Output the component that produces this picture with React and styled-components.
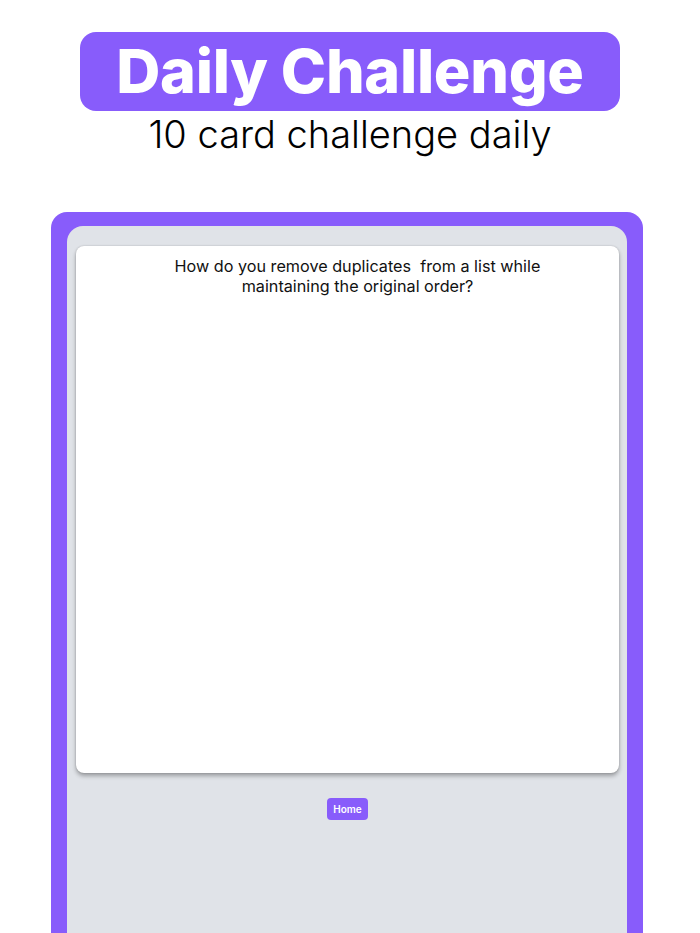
import styled, { createGlobalStyle } from "styled-components";

const GlobalStyle = createGlobalStyle`
  body {
    margin: 0;
    background: #ffffff;
    font-family: "Inter", "Noto Sans", sans-serif;
  }
`;

const Page = styled.div`
  width: 700px;
  height: 933px;
  overflow: hidden;
  display: flex;
  flex-direction: column;
  align-items: center;
`;

const Header = styled.header`
  display: flex;
  flex-direction: column;
  align-items: center;
  padding-top: 32px;
`;

const Title = styled.h1`
  margin: 0;
  width: 540px;
  height: 79px;
  border-radius: 16px;
  background: #885cfb;
  color: #ffffff;
  font-family: "Inter", sans-serif;
  font-weight: 800;
  font-size: 61px;
  line-height: 79px;
  letter-spacing: -0.3px;
  text-align: center;
`;

const Subtitle = styled.p`
  margin: 0;
  font-family: "Inter", sans-serif;
  font-weight: 300;
  font-size: 38px;
  line-height: 46px;
  color: #000000;
`;

const Frame = styled.main`
  align-self: flex-start;
  margin: 55px 0 0 51px;
  width: 592px;
  flex: 1;
  box-sizing: border-box;
  padding: 14px 16px 0;
  background: #885cfb;
  border-radius: 16px 16px 0 0;
  display: flex;
`;

const Panel = styled.section`
  flex: 1;
  background: #e0e3e8;
  border-radius: 16px 16px 0 0;
  padding: 20px 8px 0 9px;
  display: flex;
  flex-direction: column;
  align-items: center;
`;

const Card = styled.article`
  align-self: stretch;
  height: 527px;
  box-sizing: border-box;
  background: #ffffff;
  border-radius: 8px;
  box-shadow: 0 3px 4px rgba(0, 0, 0, 0.3), 0 0 2px rgba(0, 0, 0, 0.2);
  padding: 10px 0 0 20px;
`;

const Question = styled.p`
  margin: 0;
  font-family: "Inter", sans-serif;
  font-size: 16.2px;
  line-height: 20px;
  color: #111111;
  text-align: center;
`;

const HomeButton = styled.button`
  margin-top: 25px;
  width: 41px;
  height: 22px;
  padding: 0;
  border: none;
  border-radius: 4px;
  background: #885cfb;
  color: #ffffff;
  font-family: "Inter", sans-serif;
  font-weight: 600;
  font-size: 10px;
  cursor: pointer;
`;

export default function App() {
  return (
    <>
      <GlobalStyle />
      <Page>
        <Header>
          <Title>Daily Challenge</Title>
          <Subtitle>10 card challenge daily</Subtitle>
        </Header>
        <Frame>
          <Panel>
            <Card>
              <Question>
                How do you remove duplicates&nbsp; from a list while
                <br />
                maintaining the original order?
              </Question>
            </Card>
            <HomeButton>Home</HomeButton>
          </Panel>
        </Frame>
      </Page>
    </>
  );
}
